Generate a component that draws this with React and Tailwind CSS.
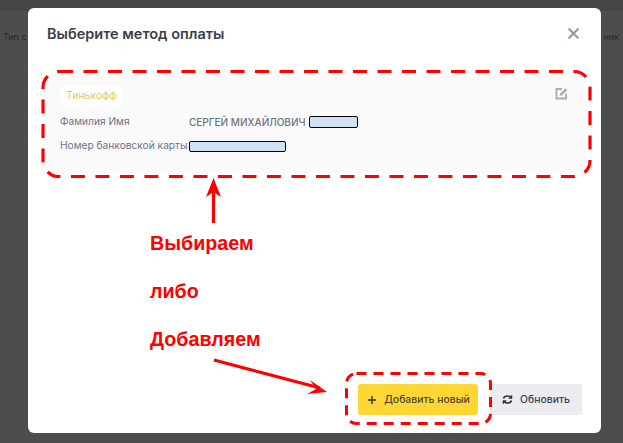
import { X, Plus } from 'lucide-react';

const Mask = ({ className }) => (
  <span className={`block rounded-[2px] border border-black bg-[#cfe2f3] ${className}`} />
);

const EditIcon = () => (
  <svg className="mt-[1px] w-[13px] h-[13px] text-[#a8acb6]" viewBox="0 0 13 13" fill="none" stroke="currentColor">
    <path d="M7 2H1.5V11.5H11V6.5" strokeWidth="1.8" />
    <path d="M5 8.5L5.5 6.5L10.5 1.5L12 3L7 8Z" fill="currentColor" strokeWidth="0.6" />
  </svg>
);

const RefreshIcon = () => (
  <svg className="w-[11px] h-[11px] text-[#33353d]" viewBox="0 0 11 11" fill="none" stroke="currentColor" strokeWidth="1.7">
    <path d="M1.5 4.5C2 2.8 3.5 2 5.5 2C7 2 8 2.6 8.8 3.6" />
    <path d="M9.5 6.5C9 8.2 7.5 9 5.5 9C4 9 3 8.4 2.2 7.4" />
    <path d="M10 1V4.5H6.8Z" fill="currentColor" strokeWidth="0.5" />
    <path d="M1 10V6.5H4.2Z" fill="currentColor" strokeWidth="0.5" />
  </svg>
);

// red markup drawn on top of the screenshot
const Annotations = () => (
  <svg className="absolute inset-0 pointer-events-none" width="623" height="443" fill="none">
    <rect x="43" y="71.5" width="547" height="105" rx="16" stroke="#ff0000" strokeWidth="3.2" strokeDasharray="14 10.5" />
    <rect x="346.5" y="373.5" width="144" height="50" rx="10" stroke="#ff0000" strokeWidth="3" strokeDasharray="10 7" />
    <path d="M213.5 223V188" stroke="#ff0000" strokeWidth="3.2" />
    <path d="M213.5 178L206 197L213.5 192L221 197Z" fill="#ff0000" />
    <path d="M214 360L320 388" stroke="#ff0000" strokeWidth="3.2" />
    <path d="M327 392L310 380L316 389L307 394Z" fill="#ff0000" />
  </svg>
);

export default function App() {
  return (
    <div className="relative w-[623px] h-[443px] overflow-hidden bg-[#4d4d4d] font-['Inter',sans-serif]">
      <div className="h-[11px] bg-[#464646]" />
      <div className="flex justify-between pt-[19px] pl-[3px] pr-[4px] text-[9px] text-[#262626]">
        <span>Тип с</span>
        <span>ник</span>
      </div>

      <div className="absolute left-[28px] top-[8px] w-[573px] h-[425px] flex flex-col rounded-[6px] bg-white">
        <div className="flex items-center justify-between pl-[19px] pr-[19px] pt-[1px] h-[50px]">
          <h2 className="text-[14.5px] font-semibold text-[#3b3f4a]">Выберите метод оплаты</h2>
          <X className="w-[17px] h-[17px] text-[#979ca8]" strokeWidth={3.2} />
        </div>

        <div className="mt-[13px] mx-[16px] h-[102px] rounded-[10px] bg-[#fafafa] pl-[16px] pr-[17px] pt-[15px]">
          <div className="flex items-start justify-between">
            <span className="rounded-[3px] bg-white px-[6px] h-[19px] flex items-center text-[10.5px] text-[#e6c84f]">Тинькофф</span>
            <EditIcon />
          </div>
          <div className="mt-[10px] flex items-center h-[14px] text-[10.2px] text-[#6e7286]">
            <span className="w-[129px]">Фамилия Имя</span>
            <span className="text-[10px] font-medium whitespace-nowrap">СЕРГЕЙ МИХАЙЛОВИЧ</span>
            <Mask className="ml-[3px] w-[49px] h-[12px]" />
          </div>
          <div className="mt-[10px] flex items-center h-[14px] text-[10.2px] text-[#6e7286]">
            <span className="w-[129px] whitespace-nowrap">Номер банковской карты</span>
            <Mask className="w-[97px] h-[11px]" />
          </div>
        </div>

        <div className="ml-[122px] mt-[59px] flex flex-col gap-[25px] font-['Liberation_Sans',sans-serif] text-[19.7px] leading-[23px] font-bold text-[#ff0000]">
          <span>Выбираем</span>
          <span>либо</span>
          <span>Добавляем</span>
        </div>

        <div className="mt-auto mb-[18px] mr-[19px] flex justify-end gap-[12px] text-[10.4px] font-medium">
          <button className="flex items-center gap-[6px] h-[31px] w-[120px] justify-center rounded-[3px] bg-[#ffd633] text-[#4a4536]">
            <Plus className="w-[12px] h-[12px] text-[#2b2b2b]" strokeWidth={2.8} />
            Добавить новый
          </button>
          <button className="flex items-center gap-[7px] h-[31px] w-[92px] justify-center rounded-[3px] bg-[#ebecf0] text-[#3f424c]">
            <RefreshIcon />
            Обновить
          </button>
        </div>
      </div>

      <Annotations />
    </div>
  );
}
